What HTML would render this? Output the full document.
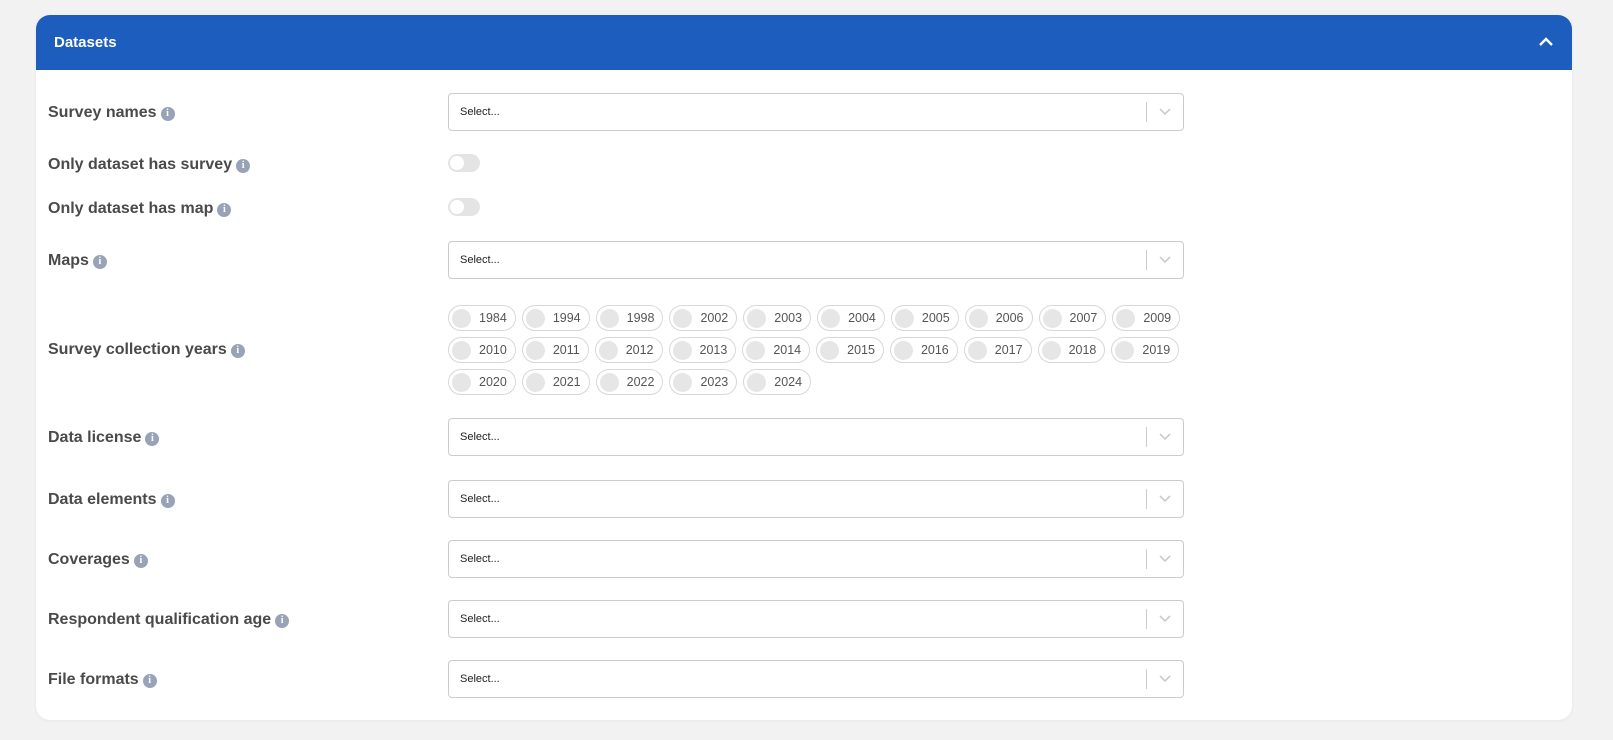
<!DOCTYPE html>
<html><head><style>
*{box-sizing:border-box;margin:0;padding:0}
body{width:1613px;height:740px;background:#f2f2f2;font-family:"Liberation Sans",sans-serif;position:relative;overflow:hidden}
.card{position:absolute;left:36px;top:15px;width:1536px;height:705px;background:#fff;border-radius:14px;overflow:hidden;box-shadow:0 1px 3px rgba(0,0,0,.05)}
.hdr{position:absolute;left:0;top:0;width:100%;height:55px;background:#1c5dbd;color:#fff;font-weight:bold;font-size:15px;padding:19px 0 0 18px}
.chev{position:absolute;right:18px;top:21px}
.lbl{position:absolute;left:48px;font-size:16px;font-weight:bold;color:#4a4a4a;line-height:20px;white-space:nowrap;margin-top:2px}
.i{display:inline-block;width:14px;height:14px;border-radius:50%;background:#98a3b8;color:#fff;font-size:10px;line-height:14px;text-align:center;vertical-align:-1px;margin-left:4px;font-family:"Liberation Serif",serif;font-weight:bold;position:relative;top:-2px}
.sel{position:absolute;left:448px;width:736px;height:38px;border:1px solid #ccc;border-radius:4px;font-size:11px;color:#222;padding:12px 0 0 11px}
.sel:after{content:"";position:absolute;right:36px;top:8px;width:1px;height:20px;background:#ccc}
.sel svg{position:absolute;right:12px;top:14px}
.tg{position:absolute;left:448px;width:32px;height:18px;border-radius:9px;background:#e4e4e4}
.tg:after{content:"";position:absolute;left:2px;top:2px;width:14px;height:14px;border-radius:50%;background:#fff}
.chips{position:absolute;left:448px;width:760px}
.row{display:flex;gap:6px;margin-bottom:6px;height:26px}
.c{display:inline-flex;align-items:center;height:26px;border:1px solid #d8d8d8;border-radius:13px;padding:0 8px 0 3px;font-size:12.5px;color:#555}
.c b{width:19px;height:19px;border-radius:50%;background:#e6e6e6;margin-right:8px}
</style></head><body>
<div class="card"><div class="hdr">Datasets<svg class="chev" width="16" height="12" viewBox="0 0 16 12"><path d="M2 9 L8 3 L14 9" stroke="#fff" stroke-width="2.4" fill="none"/></svg></div></div>

<div class="lbl" style="top:101px">Survey names<span class="i">i</span></div>
<div class="sel" style="top:93px">Select...<svg width="12" height="8"><path d="M1 1 L6 6 L11 1" stroke="#ccc" stroke-width="1.6" fill="none"/></svg></div>

<div class="lbl" style="top:153px">Only dataset has survey<span class="i">i</span></div>
<div class="tg" style="top:154px"></div>
<div class="lbl" style="top:197px">Only dataset has map<span class="i">i</span></div>
<div class="tg" style="top:198px"></div>

<div class="lbl" style="top:249px">Maps<span class="i">i</span></div>
<div class="sel" style="top:241px">Select...<svg width="12" height="8"><path d="M1 1 L6 6 L11 1" stroke="#ccc" stroke-width="1.6" fill="none"/></svg></div>

<div class="lbl" style="top:338px">Survey collection years<span class="i">i</span></div>
<div class="chips" style="top:305px">
<div class="row"><span class="c"><b></b>1984</span><span class="c"><b></b>1994</span><span class="c"><b></b>1998</span><span class="c"><b></b>2002</span><span class="c"><b></b>2003</span><span class="c"><b></b>2004</span><span class="c"><b></b>2005</span><span class="c"><b></b>2006</span><span class="c"><b></b>2007</span><span class="c"><b></b>2009</span></div>
<div class="row"><span class="c"><b></b>2010</span><span class="c"><b></b>2011</span><span class="c"><b></b>2012</span><span class="c"><b></b>2013</span><span class="c"><b></b>2014</span><span class="c"><b></b>2015</span><span class="c"><b></b>2016</span><span class="c"><b></b>2017</span><span class="c"><b></b>2018</span><span class="c"><b></b>2019</span></div>
<div class="row"><span class="c"><b></b>2020</span><span class="c"><b></b>2021</span><span class="c"><b></b>2022</span><span class="c"><b></b>2023</span><span class="c"><b></b>2024</span></div>
</div>

<div class="lbl" style="top:426px">Data license<span class="i">i</span></div>
<div class="sel" style="top:418px">Select...<svg width="12" height="8"><path d="M1 1 L6 6 L11 1" stroke="#ccc" stroke-width="1.6" fill="none"/></svg></div>
<div class="lbl" style="top:488px">Data elements<span class="i">i</span></div>
<div class="sel" style="top:480px">Select...<svg width="12" height="8"><path d="M1 1 L6 6 L11 1" stroke="#ccc" stroke-width="1.6" fill="none"/></svg></div>
<div class="lbl" style="top:548px">Coverages<span class="i">i</span></div>
<div class="sel" style="top:540px">Select...<svg width="12" height="8"><path d="M1 1 L6 6 L11 1" stroke="#ccc" stroke-width="1.6" fill="none"/></svg></div>
<div class="lbl" style="top:608px">Respondent qualification age<span class="i">i</span></div>
<div class="sel" style="top:600px">Select...<svg width="12" height="8"><path d="M1 1 L6 6 L11 1" stroke="#ccc" stroke-width="1.6" fill="none"/></svg></div>
<div class="lbl" style="top:668px">File formats<span class="i">i</span></div>
<div class="sel" style="top:660px">Select...<svg width="12" height="8"><path d="M1 1 L6 6 L11 1" stroke="#ccc" stroke-width="1.6" fill="none"/></svg></div>
</body></html>
